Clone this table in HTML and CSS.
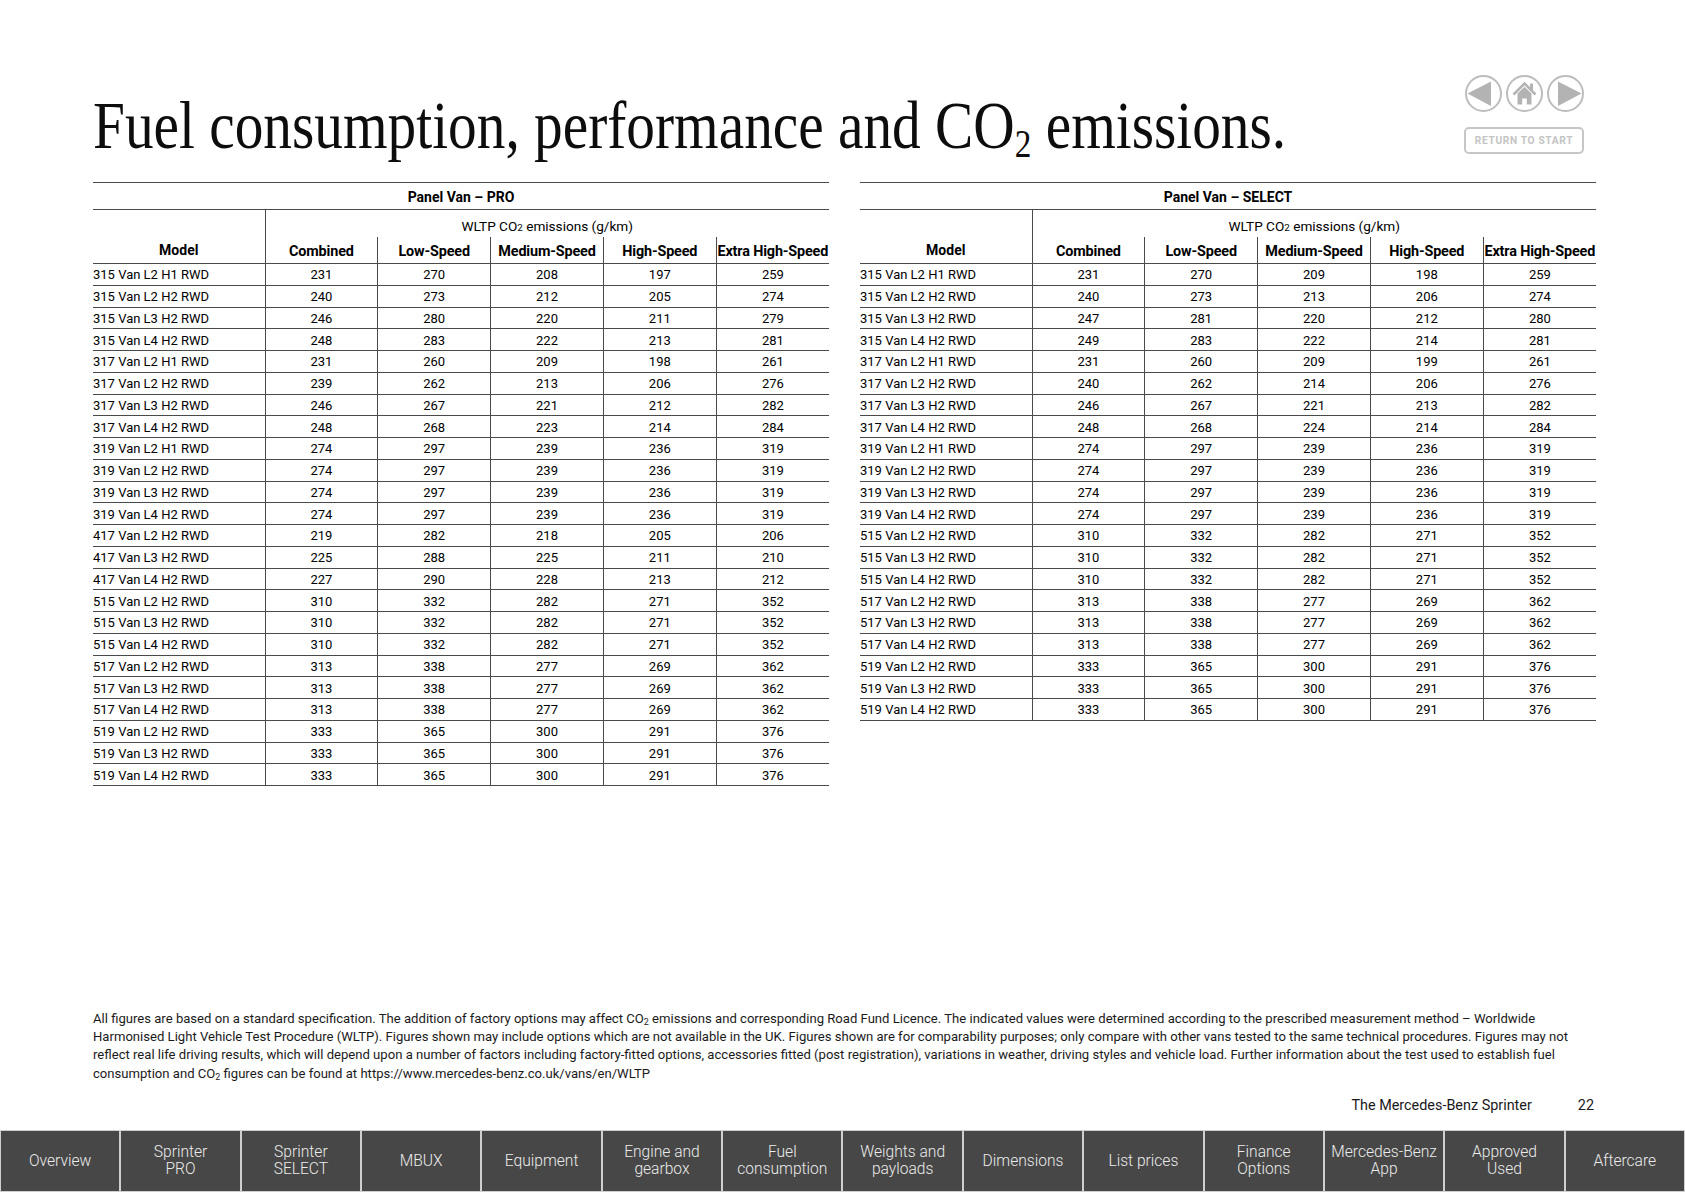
FILE: index.html
```html
<!DOCTYPE html>
<html lang="en">
<head>
<meta charset="utf-8">
<title>Fuel consumption, performance and CO2 emissions</title>
<link rel="stylesheet" href="styles.css">
</head>
<body>
<div class="page">
  <header class="top">
    <h1 class="title"><span class="title-text">Fuel consumption, performance and CO<span class="t-sub">2</span> emissions.</span></h1>
    <div class="controls">
      <div class="circles">
        <svg class="circ" viewBox="0 0 37 37" width="37" height="37"><circle cx="18.5" cy="18.5" r="17.5" fill="#fff" stroke="#bdbdbd" stroke-width="2"/><path d="M2.5 18.5 L26 6.5 L26 31 Z" fill="#b3b3b3"/></svg>
        <svg class="circ" viewBox="0 0 37 37" width="37" height="37"><circle cx="18.5" cy="18.5" r="17.5" fill="#fff" stroke="#bdbdbd" stroke-width="2"/><polyline points="7.5,19.5 18.5,8.5 29.5,19.5" fill="none" stroke="#b3b3b3" stroke-width="2.6" stroke-linejoin="miter"/><rect x="24" y="8.5" width="3" height="7" fill="#b3b3b3"/><path d="M11.5 18.5 L18.5 11.8 L25.5 18.5 V29.5 H20.8 V23.5 H16.2 V29.5 H11.5 Z" fill="#b3b3b3"/></svg>
        <svg class="circ" viewBox="0 0 37 37" width="37" height="37"><circle cx="18.5" cy="18.5" r="17.5" fill="#fff" stroke="#bdbdbd" stroke-width="2"/><path d="M34.5 18.5 L11 6.5 L11 31 Z" fill="#b3b3b3"/></svg>
      </div>
      <div class="restart">RETURN TO START</div>
    </div>
  </header>

  <section class="tables">
    <table class="co2">
      <colgroup><col class="c-model"><col><col><col><col><col></colgroup>
      <thead>
        <tr class="r-cap"><th colspan="6">Panel Van – PRO</th></tr>
        <tr class="r-group"><th rowspan="2" class="model-h">Model</th><th colspan="5" class="grp">WLTP CO<span class="s-sub">2</span> emissions (g/km)</th></tr>
        <tr class="r-head"><th>Combined</th><th>Low-Speed</th><th>Medium-Speed</th><th>High-Speed</th><th>Extra High-Speed</th></tr>
      </thead>
      <tbody>
        <tr><td>315 Van L2 H1 RWD</td><td>231</td><td>270</td><td>208</td><td>197</td><td>259</td></tr>
        <tr><td>315 Van L2 H2 RWD</td><td>240</td><td>273</td><td>212</td><td>205</td><td>274</td></tr>
        <tr><td>315 Van L3 H2 RWD</td><td>246</td><td>280</td><td>220</td><td>211</td><td>279</td></tr>
        <tr><td>315 Van L4 H2 RWD</td><td>248</td><td>283</td><td>222</td><td>213</td><td>281</td></tr>
        <tr><td>317 Van L2 H1 RWD</td><td>231</td><td>260</td><td>209</td><td>198</td><td>261</td></tr>
        <tr><td>317 Van L2 H2 RWD</td><td>239</td><td>262</td><td>213</td><td>206</td><td>276</td></tr>
        <tr><td>317 Van L3 H2 RWD</td><td>246</td><td>267</td><td>221</td><td>212</td><td>282</td></tr>
        <tr><td>317 Van L4 H2 RWD</td><td>248</td><td>268</td><td>223</td><td>214</td><td>284</td></tr>
        <tr><td>319 Van L2 H1 RWD</td><td>274</td><td>297</td><td>239</td><td>236</td><td>319</td></tr>
        <tr><td>319 Van L2 H2 RWD</td><td>274</td><td>297</td><td>239</td><td>236</td><td>319</td></tr>
        <tr><td>319 Van L3 H2 RWD</td><td>274</td><td>297</td><td>239</td><td>236</td><td>319</td></tr>
        <tr><td>319 Van L4 H2 RWD</td><td>274</td><td>297</td><td>239</td><td>236</td><td>319</td></tr>
        <tr><td>417 Van L2 H2 RWD</td><td>219</td><td>282</td><td>218</td><td>205</td><td>206</td></tr>
        <tr><td>417 Van L3 H2 RWD</td><td>225</td><td>288</td><td>225</td><td>211</td><td>210</td></tr>
        <tr><td>417 Van L4 H2 RWD</td><td>227</td><td>290</td><td>228</td><td>213</td><td>212</td></tr>
        <tr><td>515 Van L2 H2 RWD</td><td>310</td><td>332</td><td>282</td><td>271</td><td>352</td></tr>
        <tr><td>515 Van L3 H2 RWD</td><td>310</td><td>332</td><td>282</td><td>271</td><td>352</td></tr>
        <tr><td>515 Van L4 H2 RWD</td><td>310</td><td>332</td><td>282</td><td>271</td><td>352</td></tr>
        <tr><td>517 Van L2 H2 RWD</td><td>313</td><td>338</td><td>277</td><td>269</td><td>362</td></tr>
        <tr><td>517 Van L3 H2 RWD</td><td>313</td><td>338</td><td>277</td><td>269</td><td>362</td></tr>
        <tr><td>517 Van L4 H2 RWD</td><td>313</td><td>338</td><td>277</td><td>269</td><td>362</td></tr>
        <tr><td>519 Van L2 H2 RWD</td><td>333</td><td>365</td><td>300</td><td>291</td><td>376</td></tr>
        <tr><td>519 Van L3 H2 RWD</td><td>333</td><td>365</td><td>300</td><td>291</td><td>376</td></tr>
        <tr><td>519 Van L4 H2 RWD</td><td>333</td><td>365</td><td>300</td><td>291</td><td>376</td></tr>
      </tbody>
    </table>

    <table class="co2">
      <colgroup><col class="c-model"><col><col><col><col><col></colgroup>
      <thead>
        <tr class="r-cap"><th colspan="6">Panel Van – SELECT</th></tr>
        <tr class="r-group"><th rowspan="2" class="model-h">Model</th><th colspan="5" class="grp">WLTP CO<span class="s-sub">2</span> emissions (g/km)</th></tr>
        <tr class="r-head"><th>Combined</th><th>Low-Speed</th><th>Medium-Speed</th><th>High-Speed</th><th>Extra High-Speed</th></tr>
      </thead>
      <tbody>
        <tr><td>315 Van L2 H1 RWD</td><td>231</td><td>270</td><td>209</td><td>198</td><td>259</td></tr>
        <tr><td>315 Van L2 H2 RWD</td><td>240</td><td>273</td><td>213</td><td>206</td><td>274</td></tr>
        <tr><td>315 Van L3 H2 RWD</td><td>247</td><td>281</td><td>220</td><td>212</td><td>280</td></tr>
        <tr><td>315 Van L4 H2 RWD</td><td>249</td><td>283</td><td>222</td><td>214</td><td>281</td></tr>
        <tr><td>317 Van L2 H1 RWD</td><td>231</td><td>260</td><td>209</td><td>199</td><td>261</td></tr>
        <tr><td>317 Van L2 H2 RWD</td><td>240</td><td>262</td><td>214</td><td>206</td><td>276</td></tr>
        <tr><td>317 Van L3 H2 RWD</td><td>246</td><td>267</td><td>221</td><td>213</td><td>282</td></tr>
        <tr><td>317 Van L4 H2 RWD</td><td>248</td><td>268</td><td>224</td><td>214</td><td>284</td></tr>
        <tr><td>319 Van L2 H1 RWD</td><td>274</td><td>297</td><td>239</td><td>236</td><td>319</td></tr>
        <tr><td>319 Van L2 H2 RWD</td><td>274</td><td>297</td><td>239</td><td>236</td><td>319</td></tr>
        <tr><td>319 Van L3 H2 RWD</td><td>274</td><td>297</td><td>239</td><td>236</td><td>319</td></tr>
        <tr><td>319 Van L4 H2 RWD</td><td>274</td><td>297</td><td>239</td><td>236</td><td>319</td></tr>
        <tr><td>515 Van L2 H2 RWD</td><td>310</td><td>332</td><td>282</td><td>271</td><td>352</td></tr>
        <tr><td>515 Van L3 H2 RWD</td><td>310</td><td>332</td><td>282</td><td>271</td><td>352</td></tr>
        <tr><td>515 Van L4 H2 RWD</td><td>310</td><td>332</td><td>282</td><td>271</td><td>352</td></tr>
        <tr><td>517 Van L2 H2 RWD</td><td>313</td><td>338</td><td>277</td><td>269</td><td>362</td></tr>
        <tr><td>517 Van L3 H2 RWD</td><td>313</td><td>338</td><td>277</td><td>269</td><td>362</td></tr>
        <tr><td>517 Van L4 H2 RWD</td><td>313</td><td>338</td><td>277</td><td>269</td><td>362</td></tr>
        <tr><td>519 Van L2 H2 RWD</td><td>333</td><td>365</td><td>300</td><td>291</td><td>376</td></tr>
        <tr><td>519 Van L3 H2 RWD</td><td>333</td><td>365</td><td>300</td><td>291</td><td>376</td></tr>
        <tr><td>519 Van L4 H2 RWD</td><td>333</td><td>365</td><td>300</td><td>291</td><td>376</td></tr>
      </tbody>
    </table>
  </section>

  <p class="note">All figures are based on a standard specification. The addition of factory options may affect CO<span class="n-sub">2</span> emissions and corresponding Road Fund Licence. The indicated values were determined according to the prescribed measurement method – Worldwide<br>Harmonised Light Vehicle Test Procedure (WLTP). Figures shown may include options which are not available in the UK. Figures shown are for comparability purposes; only compare with other vans tested to the same technical procedures. Figures may not<br>reflect real life driving results, which will depend upon a number of factors including factory-fitted options, accessories fitted (post registration), variations in weather, driving styles and vehicle load. Further information about the test used to establish fuel<br>consumption and CO<span class="n-sub">2</span> figures can be found at https://www.mercedes-benz.co.uk/vans/en/WLTP</p>

  <div class="pageline"><span>The Mercedes-Benz Sprinter</span><span>22</span></div>

  <nav class="nav">
    <a class="nav-item">Overview</a>
    <a class="nav-item">Sprinter<br>PRO</a>
    <a class="nav-item">Sprinter<br>SELECT</a>
    <a class="nav-item">MBUX</a>
    <a class="nav-item">Equipment</a>
    <a class="nav-item">Engine and<br>gearbox</a>
    <a class="nav-item">Fuel<br>consumption</a>
    <a class="nav-item">Weights and<br>payloads</a>
    <a class="nav-item">Dimensions</a>
    <a class="nav-item">List prices</a>
    <a class="nav-item">Finance<br>Options</a>
    <a class="nav-item">Mercedes-Benz<br>App</a>
    <a class="nav-item">Approved<br>Used</a>
    <a class="nav-item">Aftercare</a>
  </nav>
</div>
</body>
</html>
```

FILE: styles.css
```css
* { box-sizing: border-box; }

html, body {
  margin: 0;
  padding: 0;
  background: #fff;
}

body {
  width: 1685px;
  height: 1192px;
  overflow: hidden;
  font-family: Roboto, "Liberation Sans", Arial, sans-serif;
  color: #111;
}

.page {
  display: flex;
  flex-direction: column;
  height: 1192px;
}

/* ---------- header ---------- */
.top {
  display: flex;
  justify-content: space-between;
  align-items: flex-start;
  padding: 75px 101px 0 93px;
}

.title {
  flex: none;
  width: 1193px;
  height: 68px;
  margin: 16px 0 0;
  font-family: "Liberation Serif", "Times New Roman", serif;
  font-weight: 400;
  font-size: 68px;
  line-height: 68px;
  white-space: nowrap;
  color: #0d0d0d;
}

.title-text {
  display: inline-block;
  transform: scaleX(0.843);
  transform-origin: left center;
}

.t-sub {
  font-size: 0.58em;
  line-height: 0;
  vertical-align: -0.24em;
}

.controls {
  display: flex;
  flex-direction: column;
  align-items: center;
  gap: 15px;
}

.circles {
  display: flex;
  gap: 4px;
}

.circ { display: block; }

.restart {
  width: 120px;
  height: 27px;
  border: 2px solid #c6c6c6;
  border-radius: 5px;
  display: flex;
  align-items: center;
  justify-content: center;
  font-size: 10.2px;
  font-weight: 700;
  letter-spacing: 0.65px;
  color: #c4c4c4;
}

/* ---------- tables ---------- */
.tables {
  display: flex;
  align-items: flex-start;
  gap: 31px;
  margin: 23px 0 0 93px;
}

.co2 {
  width: 736px;
  border-collapse: collapse;
  table-layout: fixed;
  font-size: 13px;
  color: #000;
  border-top: 1px solid #4a4a4a;
}

.co2 .c-model { width: 172px; }

.co2 th,
.co2 td {
  padding: 0;
  white-space: nowrap;
}

.co2 th { font-weight: 700; }

.r-cap th {
  height: 27px;
  padding-top: 2px;
  font-size: 14px;
  border-bottom: 1px solid #4a4a4a;
  text-align: center;
}

.r-group th {
  height: 27px;
}

.r-group .grp {
  font-weight: 400;
  font-size: 13.6px;
  padding-top: 5px;
  text-align: center;
}

.model-h {
  vertical-align: bottom;
  font-size: 14px;
  padding-bottom: 5px !important;
  border-right: 1px solid #4a4a4a;
  border-bottom: 1px solid #4a4a4a;
}

.r-head th {
  height: 27px;
  padding-top: 3px;
  font-size: 14.4px;
  letter-spacing: -0.15px;
  border-left: 1px solid #4a4a4a;
  border-bottom: 1px solid #4a4a4a;
  text-align: center;
}

.s-sub {
  font-size: 0.72em;
}

.co2 tbody td {
  height: 21.75px;
  padding-top: 1px;
  border-bottom: 1px solid #4a4a4a;
  text-align: center;
}

.co2 tbody td:first-child {
  text-align: left;
}

.co2 tbody td + td {
  border-left: 1px solid #4a4a4a;
}

/* ---------- footer ---------- */
.note {
  margin: auto 0 0;
  padding: 0 0 0 93px;
  font-size: 13.1px;
  line-height: 18.3px;
  color: #1a1a1a;
  white-space: nowrap;
}

.n-sub {
  font-size: 0.68em;
  line-height: 0;
  vertical-align: -0.25em;
}

.pageline {
  display: flex;
  justify-content: flex-end;
  gap: 46px;
  margin-top: 14px;
  padding-right: 91px;
  font-size: 14.4px;
  line-height: 18px;
  color: #1a1a1a;
}

.nav {
  display: grid;
  grid-template-columns: repeat(14, 1fr);
  gap: 2px;
  height: 62px;
  margin-top: 15px;
  padding: 1px 1px 1px;
  background: #cfcfcf;
}

.nav-item {
  display: flex;
  align-items: center;
  justify-content: center;
  text-align: center;
  background: #474747;
  color: #ececec;
  font-size: 15.6px;
  font-weight: 300;
  line-height: 17px;
}
```
